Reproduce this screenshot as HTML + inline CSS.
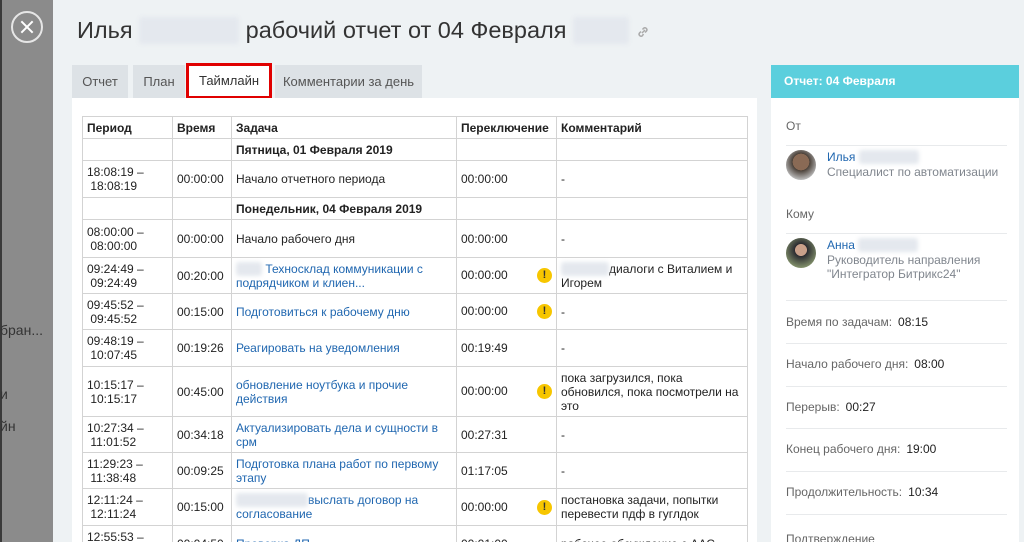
<!DOCTYPE html>
<html style="overflow:hidden;height:542px"><head><meta charset="utf-8">
<style>
*{margin:0;padding:0;box-sizing:border-box}
body{width:1024px;height:542px;overflow:hidden;background:#eef2f4;font-family:"Liberation Sans",Arial,sans-serif;position:relative}
.side{position:absolute;left:0;top:0;width:53px;height:542px;background:#8b8b8b;border-left:2px solid #3a3a3a}
.side span{position:absolute;left:-2px;font-size:14px;color:#333}
.close{position:absolute;left:9px;top:11px;width:32px;height:32px;border:2px solid #e6e6e6;border-radius:50%}
.close:before,.close:after{content:"";position:absolute;left:6px;top:13px;width:16px;height:2px;background:#fff;transform:rotate(45deg)}
.close:after{transform:rotate(-45deg)}
h1{position:absolute;left:77px;top:17px;font-weight:normal;font-size:23.5px;color:#333;white-space:nowrap}
.blur{display:inline-block;background:#e4e8ee;filter:blur(2px);color:transparent;border-radius:3px}
.tab{position:absolute;top:65px;height:33px;background:#dde2e6;color:#555;font-size:13px;line-height:33px;text-align:center}
.tab.act{background:#fff;color:#333}
.card{position:absolute;left:72px;top:98px;width:685px;height:444px;background:#fff}
table{position:absolute;left:82px;top:116px;border-collapse:collapse;font-size:12px;color:#222;table-layout:fixed}
td,th{border:1px solid #d3d3d3;padding:0 4px;vertical-align:middle;text-align:left;line-height:14px}
th{font-weight:bold;height:22px}
a{color:#2067b0;text-decoration:none}
.w{display:inline-block;width:15px;height:15px;border-radius:50%;background:#f7c600;color:#333;font-size:11px;font-weight:bold;text-align:center;line-height:15px;float:right;margin-right:0}
.rp{position:absolute;left:771px;top:65px;width:248px;height:477px;background:#fff}
.rh{height:33px;background:#5bcfdd;color:#fff;font-weight:bold;font-size:12px;line-height:33px;padding-left:13px}
.lab{position:absolute;left:15px;font-size:12px;color:#666}
.ln{position:absolute;left:15px;width:221px;border-top:1px solid #e8eaec}
.val{color:#222;margin-left:6px}
.av{position:absolute;left:15px;width:30px;height:30px;border-radius:50%}
</style></head><body>
<div class="side"><div class="close"></div>
<span style="top:322px">бран...</span><span style="top:386px">и</span><span style="top:418px">йн</span></div>
<h1>Илья <span class="blur" style="width:100px">К</span> рабочий отчет от 04 Февраля <span class="blur" style="width:56px">2</span> <svg width="14" height="14" viewBox="0 0 14 14" style="vertical-align:middle"><path d="M6 8l3-3M5 6.5l-1.5 1.5a2 2 0 0 0 2.8 2.8L7.5 9M9 7.5l1.5-1.5a2 2 0 0 0-2.8-2.8L6.5 4.5" stroke="#aaa" stroke-width="1.5" fill="none"/></svg></h1>
<div class="tab" style="left:72px;width:56px">Отчет</div>
<div class="tab" style="left:133px;width:52px">План</div>
<div class="tab act" style="left:186px;width:86px;border:3px solid #e00000;height:36px;line-height:30px;top:63px">Таймлайн</div>
<div class="tab" style="left:275px;width:147px">Комментарии за день</div>
<div class="card"></div>
<table>
<colgroup><col style="width:90px"><col style="width:59px"><col style="width:225px"><col style="width:100px"><col style="width:191px"></colgroup>
<tr><th>Период</th><th>Время</th><th>Задача</th><th>Переключение</th><th>Комментарий</th></tr>
<tr style="height:22px"><td></td><td></td><td><b>Пятница, 01 Февраля 2019</b></td><td></td><td></td></tr>
<tr style="height:37px"><td>18:08:19 –<br>&nbsp;18:08:19</td><td>00:00:00</td><td>Начало отчетного периода</td><td>00:00:00</td><td>-</td></tr>
<tr style="height:22px"><td></td><td></td><td><b>Понедельник, 04 Февраля 2019</b></td><td></td><td></td></tr>
<tr style="height:38px"><td>08:00:00 –<br>&nbsp;08:00:00</td><td>00:00:00</td><td>Начало рабочего дня</td><td>00:00:00</td><td>-</td></tr>
<tr style="height:36px"><td>09:24:49 –<br>&nbsp;09:24:49</td><td>00:20:00</td><td><a><span class="blur" style="width:26px">И</span> Техносклад коммуникации с подрядчиком и клиен...</a></td><td>00:00:00 <span class="w">!</span></td><td><span class="blur" style="width:48px">п</span>диалоги с Виталием и Игорем</td></tr>
<tr style="height:36px"><td>09:45:52 –<br>&nbsp;09:45:52</td><td>00:15:00</td><td><a>Подготовиться к рабочему дню</a></td><td>00:00:00 <span class="w">!</span></td><td>-</td></tr>
<tr style="height:37px"><td>09:48:19 –<br>&nbsp;10:07:45</td><td>00:19:26</td><td><a>Реагировать на уведомления</a></td><td>00:19:49</td><td>-</td></tr>
<tr style="height:50px"><td>10:15:17 –<br>&nbsp;10:15:17</td><td>00:45:00</td><td><a>обновление ноутбука и прочие действия</a></td><td>00:00:00 <span class="w">!</span></td><td>пока загрузился, пока обновился, пока посмотрели на это</td></tr>
<tr style="height:36px"><td>10:27:34 –<br>&nbsp;11:01:52</td><td>00:34:18</td><td><a>Актуализировать дела и сущности в срм</a></td><td>00:27:31</td><td>-</td></tr>
<tr style="height:36px"><td>11:29:23 –<br>&nbsp;11:38:48</td><td>00:09:25</td><td><a>Подготовка плана работ по первому этапу</a></td><td>01:17:05</td><td>-</td></tr>
<tr style="height:37px"><td>12:11:24 –<br>&nbsp;12:11:24</td><td>00:15:00</td><td><a><span class="blur" style="width:72px">И</span>выслать договор на согласование</a></td><td>00:00:00 <span class="w">!</span></td><td>постановка задачи, попытки перевести пдф в гуглдок</td></tr>
<tr style="height:36px"><td>12:55:53 –<br>&nbsp;13:00:43</td><td>00:04:50</td><td><a>Проверка ДП</a></td><td>00:01:00</td><td>рабочее обсуждение с ААС</td></tr>
</table>
<div class="rp"><div class="rh">Отчет: 04 Февраля</div>
<div class="lab" style="top:54px">От</div><div class="ln" style="top:80px"></div>
<div class="av" style="top:85px;background:radial-gradient(circle at 50% 40%,#8a6a55 0 35%,#4a4038 36%,#bbb 75%)"></div>
<div class="lab" style="left:56px;top:85px;color:#2067b0">Илья <span class="blur" style="width:60px">К</span></div>
<div class="lab" style="left:56px;top:100px;color:#80868e">Специалист по автоматизации</div>
<div class="lab" style="top:142px">Кому</div><div class="ln" style="top:168px"></div>
<div class="av" style="top:173px;background:radial-gradient(circle at 50% 40%,#c9a08a 0 25%,#2a2a30 26%,#8a9a70 80%)"></div>
<div class="lab" style="left:56px;top:173px;color:#2067b0">Анна <span class="blur" style="width:60px">К</span></div>
<div class="lab" style="left:56px;top:188px;color:#80868e;line-height:14px">Руководитель направления<br>"Интегратор Битрикс24"</div>
<div class="ln" style="top:235px"></div>
<div class="lab" style="top:250px">Время по задачам:<span class="val">08:15</span></div><div class="ln" style="top:278px"></div>
<div class="lab" style="top:292px">Начало рабочего дня:<span class="val">08:00</span></div><div class="ln" style="top:321px"></div>
<div class="lab" style="top:335px">Перерыв:<span class="val">00:27</span></div><div class="ln" style="top:363px"></div>
<div class="lab" style="top:377px">Конец рабочего дня:<span class="val">19:00</span></div><div class="ln" style="top:406px"></div>
<div class="lab" style="top:420px">Продолжительность:<span class="val">10:34</span></div><div class="ln" style="top:449px"></div>
<div class="lab" style="top:467px">Подтверждение</div>
</div>
</body></html>
